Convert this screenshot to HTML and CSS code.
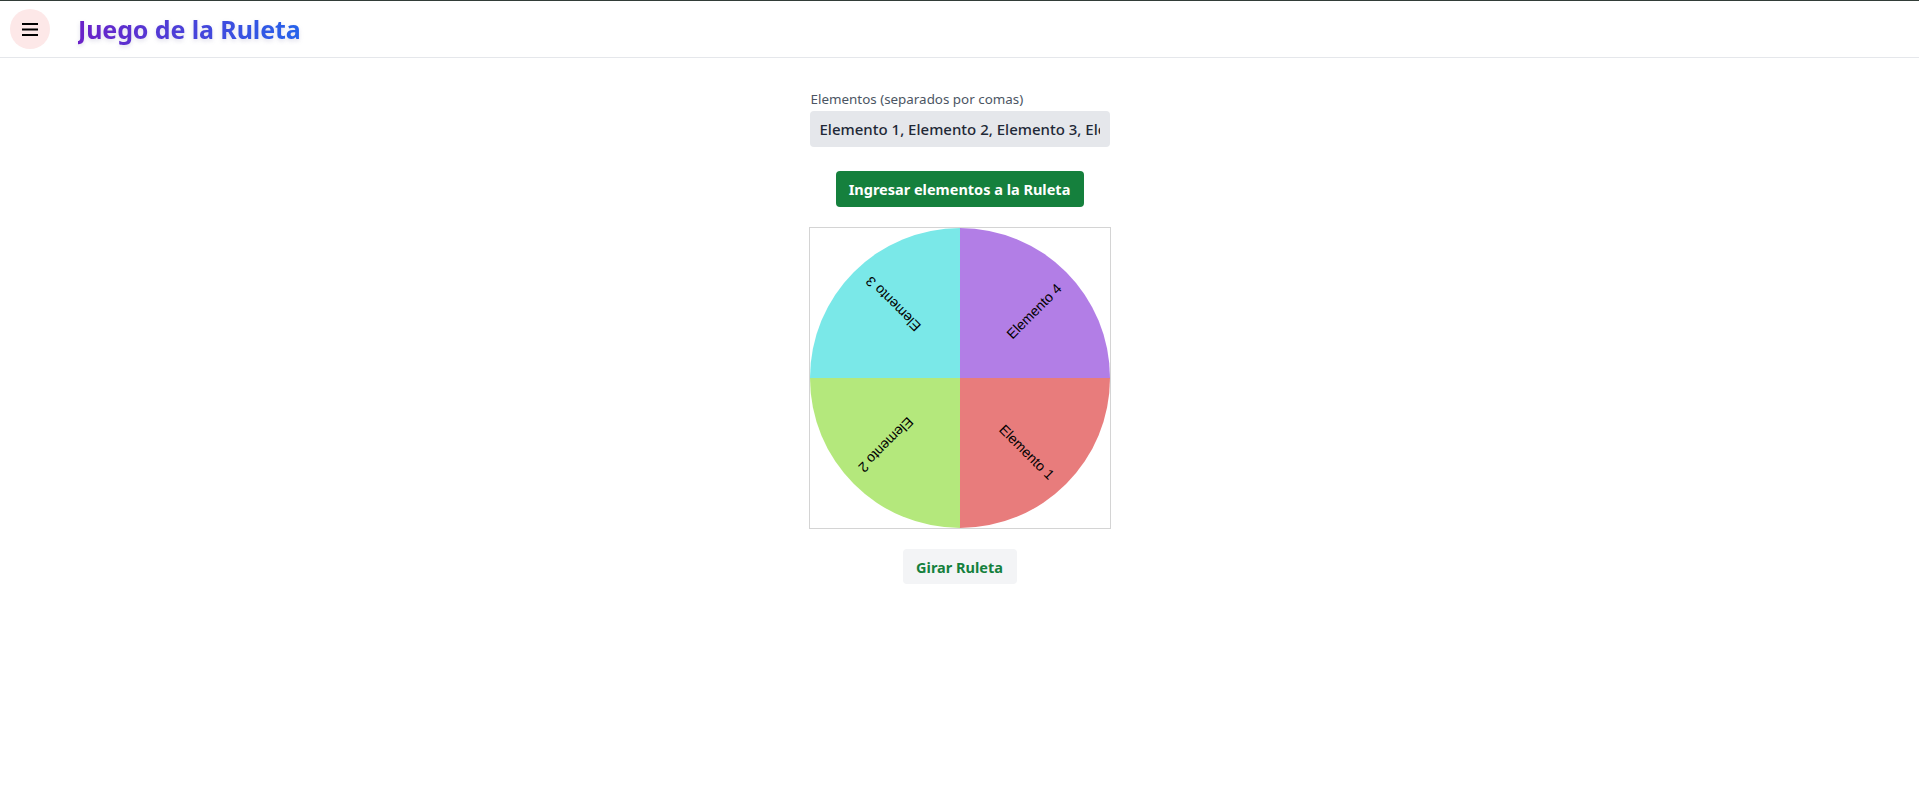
FILE: index.html
```html
<!DOCTYPE html>
<html lang="es">
<head>
<meta charset="utf-8">
<title>Juego de la Ruleta</title>
<link rel="stylesheet" href="styles.css">
</head>
<body>
<header class="topbar">
  <button class="menu-btn" aria-label="Menú">
    <svg width="16" height="13" viewBox="0 0 16 13"><path d="M0 1h16M0 6.5h16M0 12h16" stroke="#000" stroke-width="1.8"/></svg>
  </button>
  <div class="title-wrap"><h1 class="title">Juego de la Ruleta</h1></div>
</header>
<main class="content">
  <div class="field">
    <label class="label" for="items">Elementos (separados por comas)</label>
    <input id="items" class="input" type="text" value="Elemento 1, Elemento 2, Elemento 3, Elemento 4">
  </div>
  <button class="btn-primary">Ingresar elementos a la Ruleta</button>
  <div class="wheel-box">
    <svg width="300" height="300" viewBox="0 0 300 300">
      <g transform="translate(150 150)">
        <path d="M0 0 L150 0 A150 150 0 0 1 0 150 Z" fill="#e87c7c"/>
        <path d="M0 0 L0 150 A150 150 0 0 1 -150 0 Z" fill="#b4e87c"/>
        <path d="M0 0 L-150 0 A150 150 0 0 1 0 -150 Z" fill="#7ae8e8"/>
        <path d="M0 0 L0 -150 A150 150 0 0 1 150 0 Z" fill="#b27ee6"/>
        <g class="wheel-text">
          <text transform="rotate(45)" x="135" y="10" text-anchor="end">Elemento 1</text>
          <text transform="rotate(135)" x="135" y="10" text-anchor="end">Elemento 2</text>
          <text transform="rotate(225)" x="135" y="10" text-anchor="end">Elemento 3</text>
          <text transform="rotate(315)" x="135" y="10" text-anchor="end">Elemento 4</text>
        </g>
      </g>
    </svg>
  </div>
  <button class="btn-secondary">Girar Ruleta</button>
</main>
</body>
</html>
```
FILE: styles.css
```css
* { box-sizing: border-box; }
html, body { margin: 0; padding: 0; background: #fff; }
body {
  font-family: "Noto Sans", "Open Sans", sans-serif;
  border-top: 1px solid #323d38;
}
.topbar {
  height: 57px;
  display: flex;
  align-items: center;
  padding: 0 10px;
  border-bottom: 1px solid #e5e7eb;
}
.menu-btn {
  width: 40px;
  height: 40px;
  border-radius: 50%;
  border: none;
  background: #fde8e8;
  display: flex;
  align-items: center;
  justify-content: center;
  padding: 0;
}
.title-wrap { margin-left: 28px; }
.title {
  margin: 0;
  font-size: 25px;
  font-weight: 700;
  letter-spacing: -0.1px;
  background: linear-gradient(90deg, #6b21c8, #2563eb);
  -webkit-background-clip: text;
  background-clip: text;
  color: transparent;
  filter: drop-shadow(0 2px 2px rgba(80, 70, 140, 0.18));
  line-height: 32px;
}
.content {
  display: flex;
  flex-direction: column;
  align-items: center;
  padding-top: 32px;
}
.field {
  width: 300px;
  display: flex;
  flex-direction: column;
}
.label {
  font-size: 13.4px;
  color: #4b5563;
  margin-left: 1px;
  line-height: 18px;
  margin-bottom: 3px;
}
.input {
  width: 300px;
  height: 36px;
  border: none;
  border-radius: 4px;
  background: #e5e7eb;
  padding: 0 10px;
  font-family: inherit;
  font-size: 15px;
  font-weight: 500;
  color: #1f2937;
  outline: none;
}
.btn-primary {
  margin-top: 24px;
  width: 248px;
  height: 36px;
  border: none;
  border-radius: 4px;
  background: #15803d;
  color: #fff;
  font-family: inherit;
  font-size: 14.5px;
  font-weight: 700;
  padding: 0;
}
.wheel-box {
  margin-top: 20px;
  width: 302px;
  height: 302px;
  border: 1px solid #d4d4d4;
  line-height: 0;
}
.wheel-text text {
  font-family: "Liberation Sans", Arial, sans-serif;
  font-size: 14px;
  fill: #000;
}
.btn-secondary {
  margin-top: 20px;
  width: 114px;
  height: 35px;
  border: none;
  border-radius: 4px;
  background: #f3f4f6;
  color: #15803d;
  font-family: inherit;
  font-size: 14.5px;
  font-weight: 700;
  padding: 0;
}
```
